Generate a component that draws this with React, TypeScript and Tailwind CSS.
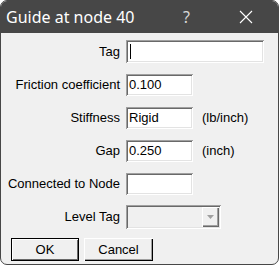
import React from 'react';

const sunken =
  'bg-white shadow-[inset_1px_1px_0_#a0a0a0,inset_-1px_-1px_0_#ffffff,inset_2px_2px_0_#696969,inset_-2px_-2px_0_#e3e3e3]';

function Row({ label, children }: { label: string; children: React.ReactNode }) {
  return (
    <div className="grid h-[33px] grid-cols-[119px_1fr] items-center">
      <div className="text-right">{label}</div>
      <div className="flex items-center pl-[6px]">{children}</div>
    </div>
  );
}

export default function App() {
  return (
    <div className="h-[267px] w-[279px] bg-white" style={{ fontFamily: '"Liberation Sans", Arial, sans-serif' }}>
      <div className="flex h-[265px] flex-col overflow-hidden rounded-[7px] border border-[#474747] bg-[#f0f0f0]">
        <div
          className="flex h-[32px] shrink-0 items-center bg-[#474747] pl-[5px] text-[16px] text-white"
          style={{ fontFamily: '"Noto Sans", "Open Sans", sans-serif' }}
        >
          <span className="flex-1">Guide at node 40</span>
          <span className="w-[56px] text-[16px] text-[#d8d8d8]">?</span>
          <svg width="14" height="14" viewBox="0 0 14 14" className="mr-[25px]">
            <path d="M1 1 L13 13 M13 1 L1 13" stroke="#ffffff" strokeWidth="1.1" />
          </svg>
        </div>

        <div className="flex flex-1 flex-col pt-[2px] text-[13px] text-black">
          <Row label="Tag">
            <div className={`flex h-[23px] w-[138px] items-center pl-[4px] ${sunken}`}>
              <div className="h-[15px] w-px bg-black" />
            </div>
          </Row>
          <Row label="Friction coefficient">
            <div className={`flex h-[22px] w-[67px] items-center pl-[3px] ${sunken}`}>0.100</div>
          </Row>
          <Row label="Stiffness">
            <div className={`flex h-[22px] w-[67px] items-center pl-[3px] ${sunken}`}>Rigid</div>
            <span className="ml-[9px]">(lb/inch)</span>
          </Row>
          <Row label="Gap">
            <div className={`flex h-[22px] w-[67px] items-center pl-[3px] ${sunken}`}>0.250</div>
            <span className="ml-[9px]">(inch)</span>
          </Row>
          <Row label="Connected to Node">
            <div className={`h-[22px] w-[67px] ${sunken}`} />
          </Row>
          <Row label="Level Tag">
            <div className="flex h-[24px] w-[95px] bg-[#f0f0f0] p-[2px] shadow-[inset_1px_1px_0_#a0a0a0,inset_-1px_-1px_0_#ffffff,inset_2px_2px_0_#696969,inset_-2px_-2px_0_#e3e3e3]">
              <div className="flex-1" />
              <div className="flex w-[17px] items-center justify-center bg-[#f0f0f0] shadow-[inset_1px_1px_0_#ffffff,inset_-1px_-1px_0_#696969,inset_-2px_-2px_0_#a0a0a0]">
                <svg width="7" height="4" viewBox="0 0 7 4">
                  <path d="M0 0 H7 L3.5 4 Z" fill="#a0a0a0" />
                </svg>
              </div>
            </div>
          </Row>
          <div className="flex h-[33px] items-center gap-[5px] pl-[10px]">
            <button className="flex h-[23px] w-[68px] items-center justify-center bg-[#f0f0f0] shadow-[inset_0_0_0_1px_#000000,inset_2px_2px_0_#ffffff,inset_-2px_-2px_0_#696969]">
              OK
            </button>
            <button className="flex h-[23px] w-[69px] items-center justify-center bg-[#f0f0f0] shadow-[inset_1px_1px_0_#ffffff,inset_-1px_-1px_0_#000000,inset_-2px_-2px_0_#a0a0a0]">
              Cancel
            </button>
          </div>
        </div>
      </div>
    </div>
  );
}
